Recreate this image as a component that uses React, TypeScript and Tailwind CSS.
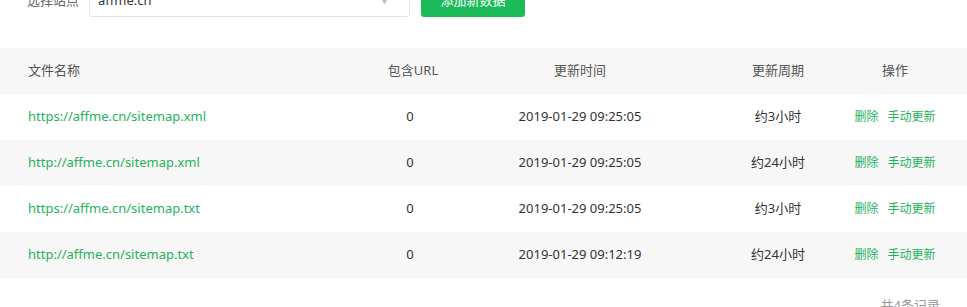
import React from "react";

type Row = {
  url: string;
  count: number;
  time: string;
  period: string;
};

const rows: Row[] = [
  { url: "https://affme.cn/sitemap.xml", count: 0, time: "2019-01-29 09:25:05", period: "约3小时" },
  { url: "http://affme.cn/sitemap.xml", count: 0, time: "2019-01-29 09:25:05", period: "约24小时" },
  { url: "https://affme.cn/sitemap.txt", count: 0, time: "2019-01-29 09:25:05", period: "约3小时" },
  { url: "http://affme.cn/sitemap.txt", count: 0, time: "2019-01-29 09:12:19", period: "约24小时" },
];

const grid = "grid grid-cols-[370px_80px_260px_136px_98px_1fr] items-center h-[46px]";

const App = (): React.JSX.Element => {
  return (
    <div
      className="w-[967px] h-[307px] overflow-hidden bg-white text-[13px]"
      style={{ fontFamily: '"Noto Sans", "Noto Sans CJK SC", sans-serif' }}
    >
      <div className="flex items-center -mt-[15px] h-[32px]">
        <label className="shrink-0 whitespace-nowrap pl-[27px] text-[#666]">选择站点</label>
        <div className="ml-[10px] w-[321px] h-[32px] border border-[#e3e3e3] rounded-[3px] flex items-center justify-between px-[8px] text-[#333]">
          <span>affme.cn</span>
          <span className="text-[9px] text-[#bbb] mr-[12px]">▼</span>
        </div>
        <button className="ml-[11px] w-[104px] h-[32px] rounded-[3px] bg-[#1bbb5a] text-white">
          添加新数据
        </button>
      </div>

      <div className="mt-[31px]">
        <div className={`${grid} bg-[#f7f7f7] text-[#555]`}>
          <div className="pl-[28px]">文件名称</div>
          <div className="text-center pl-[6px]">包含URL</div>
          <div className="text-center">更新时间</div>
          <div className="text-center">更新周期</div>
          <div className="text-center">操作</div>
          <div />
        </div>
        {rows.map((r, i) => (
          <div key={i} className={`${grid} ${i % 2 === 1 ? "bg-[#f7f7f7]" : "bg-white"} text-[#333]`}>
            <div className="pl-[28px] text-[#1fb35b]">{r.url}</div>
            <div className="text-center">{r.count}</div>
            <div className="text-center">{r.time}</div>
            <div className="text-center">{r.period}</div>
            <div className="flex justify-center gap-[9px] text-[12px] text-[#1fb35b]">
              <span>删除</span>
              <span>手动更新</span>
            </div>
            <div />
          </div>
        ))}
      </div>

      <div className="flex justify-end pr-[27px] mt-[18px] text-[#999]">共4条记录</div>
    </div>
  );
};

export default App;
